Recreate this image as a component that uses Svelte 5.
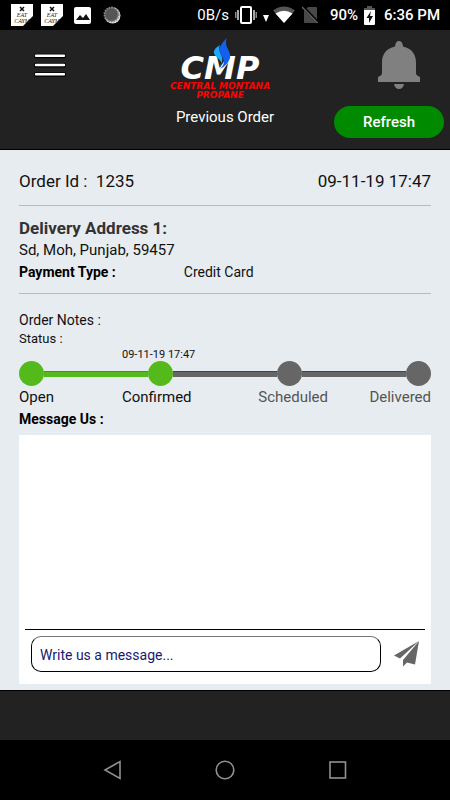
<script>
  let message = '';

  const order = {
    id: '1235',
    date: '09-11-19 17:47',
    address: 'Sd, Moh, Punjab, 59457',
    payment: 'Credit Card',
  };

  const steps = [
    { label: 'Open', date: '', done: true },
    { label: 'Confirmed', date: '09-11-19 17:47', done: true },
    { label: 'Scheduled', date: '', done: false },
    { label: 'Delivered', date: '', done: false },
  ];

  function sendMessage() {
    message = '';
  }
</script>

<div class="screen">
  <div class="status-bar">
    <div class="status-left">
      {#each [1, 2] as n (n)}
        <svg width="22" height="22" viewBox="0 0 22 22">
          <path d="M0 0h22v12L12 22H0z" fill="#fff" />
          <path d="M9 3l4 4M13 3l-4 4" stroke="#111" stroke-width="1.5" />
          <text x="11" y="13" class="tiny">EAT</text>
          <text x="11" y="19" class="tiny">CAYM</text>
        </svg>
      {/each}
      <svg class="photo" width="17" height="17" viewBox="0 0 17 17">
        <rect width="17" height="17" rx="2" fill="#fff" />
        <path d="M2 13l4-5 3 3 3-4 4 6z" fill="#111" />
      </svg>
      <svg width="18" height="18" viewBox="0 0 18 18">
        <circle cx="9.5" cy="9.5" r="8" fill="#ddd" />
        <circle cx="8.5" cy="8.5" r="7" fill="#555" stroke="#888" stroke-width="2" stroke-dasharray="1.5 1" />
      </svg>
    </div>
    <div class="status-right">
      <span>0B/s</span>
      <svg class="vibrate" width="22" height="18" viewBox="0 0 22 18">
        <rect x="6" y="1" width="10" height="16" rx="1" fill="none" stroke="#fff" stroke-width="2" />
        <path d="M3 4v10M19 4v10" stroke="#ddd" stroke-width="1.5" />
        <path d="M.8 6v6M21.2 6v6" stroke="#aaa" stroke-width="1.2" />
      </svg>
      <svg class="traffic" width="6" height="18" viewBox="0 0 6 18"><path d="M0 9h6l-3 7z" fill="#fff" /></svg>
      <svg width="22" height="18" viewBox="0 0 22 18">
        <path d="M0 4.5Q11-3.5 22 4.5L11 17z" fill="#555" />
        <path d="M2.5 7.5Q11 2 19.5 7.5L11 17z" fill="#fff" />
      </svg>
      <svg class="no-sim" width="17" height="18" viewBox="0 0 17 18">
        <path d="M2 5l4-4h8q1 0 1 1v15H3q-1 0-1-1z" fill="#484848" />
        <path d="M0 0l16 16.5" stroke="#000" stroke-width="3" />
        <path d="M0 1l15.5 16" stroke="#666" stroke-width="1.5" />
      </svg>
      <span class="strong">90%</span>
      <svg class="battery" width="11" height="19" viewBox="0 0 11 19">
        <path d="M3 0h5v2h3v4H0V2h3z" fill="#555" />
        <path d="M0 4h11v14q0 1-1 1H1q-1 0-1-1z" fill="#fff" />
        <path d="M7 5L2.5 12H5v5l4-7H6z" fill="#111" />
      </svg>
      <span class="strong">6:36 PM</span>
    </div>
  </div>

  <header>
    <button class="icon-btn menu-btn" aria-label="Menu">
      <svg width="32" height="24" viewBox="0 0 32 24">
        <path d="M2 3h28M2 12.3h28M2 21.6h28" stroke="#000" stroke-width="4.5" stroke-linecap="round" />
        <path d="M2 2.8h28M2 12h28M2 21.2h28" stroke="#fff" stroke-width="2.4" stroke-linecap="round" />
      </svg>
    </button>
    <svg class="logo" width="118" height="64" viewBox="0 0 118 64" role="img" aria-label="Central Montana Propane">
      <text x="54" y="43" class="logo-name">CMP</text>
      <path d="M53 31C61 25 46 21 48 15Q50 11 54 9C50 17 62 21 53 31z" fill="#19a9ff" />
      <path d="M54 33C64 24 51 18 54 11Q56 6 61 2C57 11 66 15 64 22Q62 29 54 33z" fill="#1261ed" />
      <text x="54" y="53" class="logo-sub">CENTRAL MONTANA</text>
      <text x="54" y="62" class="logo-sub">PROPANE</text>
    </svg>
    <button class="icon-btn bell-btn" aria-label="Notifications">
      <svg width="42" height="50" viewBox="0 0 42 50">
        <path d="M21 1q3.5 0 4 5.500c9 2 13 8 13 16V34q1 2 4 3v5H0v-5q3-1 4-3V22.500c0-8 4-14 13-16Q17.500 1 21 1z" fill="#808080" />
        <path d="M16 44h10q-1 5-5 5t-5-5z" fill="#808080" />
      </svg>
    </button>
    <h1>Previous Order</h1>
    <button class="refresh">Refresh</button>
  </header>

  <main>
    <div class="order-head">
      <span>Order Id :&nbsp; {order.id}</span>
      <span>{order.date}</span>
    </div>

    <section class="address">
      <h2>Delivery Address 1:</h2>
      <p>{order.address}</p>
      <div class="payment">
        <strong>Payment Type :</strong>
        <span>{order.payment}</span>
      </div>
    </section>

    <section class="notes">
      <p class="note-title">Order Notes :</p>
      <p class="note-status">Status :</p>
      <div class="step-row dates">
        {#each steps as step}
          <span>{step.date}</span>
        {/each}
      </div>
      <div class="track">
        {#each steps as step, i}
          {#if i > 0}
            <span class="line" class:done={step.done}></span>
          {/if}
          <span class="dot" class:done={step.done}></span>
        {/each}
      </div>
      <div class="step-row labels">
        {#each steps as step}
          <span class:pending={!step.done}>{step.label}</span>
        {/each}
      </div>
    </section>

    <label class="message-title" for="message">Message Us :</label>
    <div class="chat">
      <div class="messages"></div>
      <form on:submit|preventDefault={sendMessage}>
        <input id="message" type="text" placeholder="Write us a message..." bind:value={message} />
        <button class="icon-btn" aria-label="Send">
          <svg width="25" height="26" viewBox="0 0 25 26">
            <path d="M25 0L0 14.5l6 3z" fill="#666" />
            <path d="M25 0L9 19v6.5l4-4 8 2z" fill="#666" />
          </svg>
        </button>
      </form>
    </div>
  </main>

  <footer></footer>

  <nav>
    <button class="icon-btn" aria-label="Back">
      <svg width="20" height="20" viewBox="0 0 20 20">
        <path d="M17 1.5v17L2 10z" fill="none" stroke="#909090" stroke-width="1.6" />
      </svg>
    </button>
    <button class="icon-btn" aria-label="Home">
      <svg width="20" height="20" viewBox="0 0 20 20">
        <circle cx="10" cy="10" r="8.8" fill="none" stroke="#909090" stroke-width="1.6" />
      </svg>
    </button>
    <button class="icon-btn" aria-label="Recent apps">
      <svg width="20" height="20" viewBox="0 0 20 20">
        <rect x="2" y="2" width="15.5" height="16" fill="none" stroke="#909090" stroke-width="1.6" />
      </svg>
    </button>
  </nav>
</div>

<style>
  :global(body) {
    margin: 0;
    background: #000;
  }

  .screen {
    display: flex;
    flex-direction: column;
    min-height: 100vh;
    font-family: Roboto, 'Liberation Sans', sans-serif;
    color: #111;
  }

  svg {
    display: block;
    flex: none;
  }

  h1,
  h2,
  p {
    margin: 0;
  }

  .icon-btn {
    padding: 0;
    border: none;
    background: none;
    cursor: pointer;
  }

  .status-bar {
    display: flex;
    align-items: center;
    justify-content: space-between;
    height: 30px;
    padding: 0 10px 0 11px;
    background: #000;
    color: #fff;
    font-size: 15px;
  }

  .status-left,
  .status-right {
    display: flex;
    align-items: center;
  }

  .status-left {
    gap: 8px;
  }

  .photo {
    margin: 0 4px 0 3px;
  }

  .status-right {
    gap: 6px;
  }

  .traffic {
    margin-right: -2px;
  }

  .no-sim {
    margin: 0 5px 0 1px;
  }

  .battery {
    margin-right: 3px;
  }

  .strong {
    font-weight: 500;
  }

  .tiny {
    font: italic 6px 'Liberation Serif', serif;
    text-anchor: middle;
    fill: #222;
  }

  header {
    display: grid;
    grid-template-columns: 1fr auto 1fr;
    grid-template-rows: 70px 44px;
    align-items: center;
    height: 120px;
    box-sizing: border-box;
    padding: 0 6px;
    background: #222;
    border-bottom: 1px solid #000;
  }

  .menu-btn {
    justify-self: start;
    margin-left: 28px;
  }

  .bell-btn {
    justify-self: end;
    margin-right: 24px;
  }

  .logo {
    align-self: end;
  }

  .logo-name,
  .logo-sub {
    font-family: 'DejaVu Sans', sans-serif;
    font-weight: 700;
    font-style: italic;
    text-anchor: middle;
  }

  .logo-name {
    font-size: 32px;
    fill: #fff;
  }

  .logo-sub {
    font-size: 9px;
    fill: #f00;
  }

  h1 {
    grid-column: 2;
    align-self: start;
    justify-self: center;
    padding-top: 7px;
    color: #fff;
    font-size: 15px;
    font-weight: 400;
    line-height: 20px;
    white-space: nowrap;
  }

  .refresh {
    justify-self: end;
    width: 110px;
    height: 32px;
    border: none;
    border-radius: 16px;
    background: #008a00;
    color: #fff;
    font-family: inherit;
    font-size: 15px;
    font-weight: 500;
    cursor: pointer;
  }

  main {
    display: flex;
    flex: 1;
    flex-direction: column;
    padding: 7px 19px 6px;
    background: #e7ecf0;
  }

  .order-head {
    display: flex;
    align-items: center;
    justify-content: space-between;
    height: 48px;
    border-bottom: 1px solid #bbb;
    font-size: 17px;
  }

  .address {
    padding: 11px 0 10px;
    border-bottom: 1px solid #bbb;
    line-height: 22px;
    font-size: 15px;
  }

  h2 {
    color: #333;
    font-size: 17px;
    font-weight: 700;
    line-height: 22px;
  }

  .payment {
    display: grid;
    grid-template-columns: 2fr 3fr;
    font-size: 14px;
  }

  .payment strong,
  .message-title {
    color: #000;
    font-weight: 700;
  }

  .notes {
    padding-top: 16px;
  }

  .note-title {
    font-size: 14px;
    line-height: 20px;
  }

  .note-status {
    font-size: 13px;
    line-height: 17px;
  }

  .step-row {
    display: grid;
    grid-template-columns: repeat(4, 1fr);
    white-space: nowrap;
  }

  .step-row span:nth-child(n + 3) {
    text-align: right;
  }

  .dates {
    height: 14px;
    font-size: 11px;
    line-height: 16px;
  }

  .track {
    display: flex;
    align-items: center;
  }

  .dot {
    width: 25px;
    height: 25px;
    border-radius: 50%;
    background: #666;
  }

  .line {
    flex: 1;
    height: 6px;
    box-sizing: border-box;
    border-top: 1px solid #444;
    background: #666;
  }

  .dot.done,
  .line.done {
    background: #54b91a;
  }

  .line.done {
    border-color: #12ad12;
  }

  .labels {
    font-size: 15px;
    line-height: 22px;
  }

  .pending {
    color: #555;
  }

  .message-title {
    font-size: 14px;
    line-height: 22px;
  }

  .chat {
    display: flex;
    flex: 1;
    flex-direction: column;
    margin-top: 5px;
    padding: 0 6px;
    background: #fff;
  }

  .messages {
    flex: 1;
    min-height: 120px;
    border-bottom: 1px solid #000;
  }

  form {
    display: flex;
    align-items: center;
    gap: 13px;
    padding: 6px 6px 12px;
  }

  input {
    flex: 1;
    min-width: 0;
    height: 36px;
    box-sizing: border-box;
    padding: 2px 8px 0;
    border: 1px solid #000;
    border-top-color: #777;
    border-radius: 10px;
    background: #fff;
    color: #191970;
    font-family: inherit;
    font-size: 14px;
  }

  input::placeholder {
    color: #191970;
    opacity: 1;
  }

  footer {
    height: 50px;
    box-sizing: border-box;
    border-top: 1px solid #000;
    background: #222;
  }

  nav {
    display: flex;
    align-items: center;
    justify-content: space-evenly;
    height: 60px;
    padding: 0 10px;
    background: #000;
  }
</style>
